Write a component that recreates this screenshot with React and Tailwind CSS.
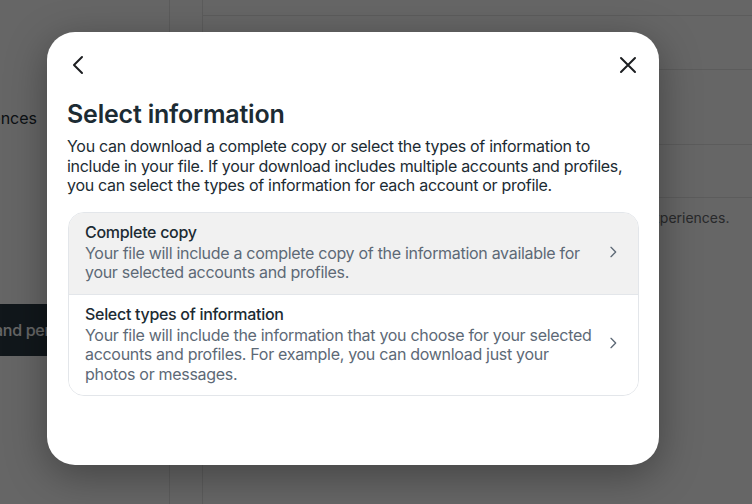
import React from "react";

const font = { fontFamily: "Inter, 'Noto Sans', Arial, sans-serif" };

function Chevron({ dir = "right", className = "" }) {
  const d = dir === "right" ? "M9 5l7 7-7 7" : "M15 4l-8 8 8 8";
  return (
    <svg viewBox="0 0 24 24" className={className} fill="none" stroke="currentColor" strokeWidth="2" strokeLinecap="round" strokeLinejoin="round">
      <path d={d} />
    </svg>
  );
}

function Option({ title, desc, active }) {
  return (
    <div className={`flex items-center pl-4 pr-[17px] pt-[8px] pb-[11px] ${active ? "bg-[#f1f1f1]" : "bg-white"}`}>
      <div className="flex-1 pr-2">
        <div className="text-[16px] leading-[22px] font-medium text-[#1c2b33]">{title}</div>
        <div className="mt-px text-[16px] leading-[19.5px] text-[#5d6976]">{desc}</div>
      </div>
      <Chevron className="w-[16px] h-[16px] text-[#5d6976]" />
    </div>
  );
}

export default function App() {
  return (
    <div className="relative w-[752px] h-[504px] overflow-hidden bg-white" style={font}>
      {/* background page */}
      <div className="flex h-full">
        <div className="w-[300px] -ml-[130px] shrink-0 border-r border-[#e5e5e5] pt-[100px] flex flex-col">
          <div className="h-[36px] flex items-center justify-end pr-[132px] text-[16px] text-[#1c2b33]">Ad preferences</div>
          <div className="h-[70px]" />
          <div className="h-[36px] flex items-center justify-end pr-[137px] text-[16px] text-[#1c2b33]">Password and security</div>
          <div className="h-[62px]" />
          <div className="h-[52px] bg-[#2b3b45] flex items-center text-[16px] text-white font-medium whitespace-nowrap overflow-hidden tracking-[-0.3px]">
            <span className="-ml-[2px]">Your information and permissions</span>
          </div>
        </div>
        <div className="flex-1 pl-[32px]">
          <div className="border-l border-[#e5e5e5] h-full">
            <div className="h-[16px] border-b border-[#e5e5e5]" />
            <div className="h-[54px] border-b border-[#e5e5e5]" />
            <div className="h-[75px] border-b border-[#e5e5e5]" />
            <div className="h-[53px] border-b border-[#e5e5e5]" />
            <div className="pt-[11px] pl-[56px] text-[14px] leading-[18px] text-[#65676b] whitespace-nowrap">
              Download or transfer information to help personalize your experiences.
            </div>
          </div>
        </div>
      </div>

      {/* overlay */}
      <div className="absolute inset-0 bg-black/60" />

      {/* modal */}
      <div className="absolute left-[47px] top-[32px] w-[612px] h-[433px] bg-white rounded-[28px] shadow-[0_10px_40px_rgba(0,0,0,0.35)] px-5 pt-[21px] tracking-[-0.3px]">
        <div className="flex items-center justify-between h-[24px]">
          <Chevron dir="left" className="w-[24px] h-[24px] text-[#1c1e21]" />
          <svg viewBox="0 0 24 24" className="w-[24px] h-[24px] -mr-[1px] text-[#1c1e21]" fill="none" stroke="currentColor" strokeWidth="2" strokeLinecap="round">
            <path d="M5 5l14 14M19 5L5 19" />
          </svg>
        </div>
        <h1 className="mt-[21px] text-[25px] leading-[32px] font-semibold tracking-[-0.2px] text-[#1c2b33]">Select information</h1>
        <p className="mt-[7px] text-[16px] leading-[19.5px] text-[#1c2b33]">
          You can download a complete copy or select the types of information to include in your file. If your download includes multiple accounts and profiles, you can select the types of information for each account or profile.
        </p>
        <div className="mt-[16px] ml-px border border-[#e3e6ea] rounded-[16px] overflow-hidden">
          <Option
            active
            title="Complete copy"
            desc="Your file will include a complete copy of the information available for your selected accounts and profiles."
          />
          <div className="border-t border-[#e3e6ea]" />
          <Option
            title="Select types of information"
            desc="Your file will include the information that you choose for your selected accounts and profiles. For example, you can download just your photos or messages."
          />
        </div>
      </div>
    </div>
  );
}
